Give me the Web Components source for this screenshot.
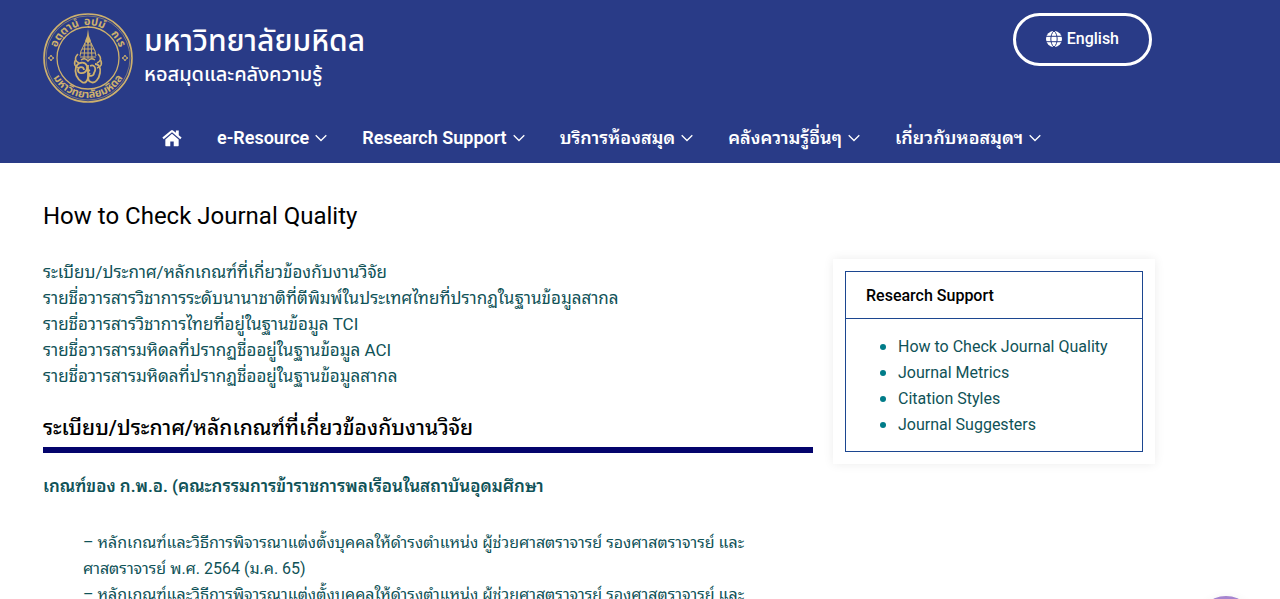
<!DOCTYPE html>
<html lang="th">
<head>
<meta charset="utf-8">
<title>How to Check Journal Quality</title>
<style>
    body {
        margin: 0;
        background: #fff;
        color: #0f5257;
        font: 16px/26px Roboto, "Noto Sans Thai Looped", "Noto Looped Thai", Loma, Garuda, Waree, "Noto Sans Thai", "Noto Sans", sans-serif;
        overflow-x: hidden;
    }
</style>
</head>
<body>
<site-header>
    <site-logo slot="logo"></site-logo>
    <language-button slot="action">English</language-button>
    <nav-item slot="nav" home></nav-item>
    <nav-item slot="nav" menu>e-Resource</nav-item>
    <nav-item slot="nav" menu>Research Support</nav-item>
    <nav-item slot="nav" menu>บริการห้องสมุด</nav-item>
    <nav-item slot="nav" menu>คลังความรู้อื่นๆ</nav-item>
    <nav-item slot="nav" menu>เกี่ยวกับหอสมุดฯ</nav-item>
</site-header>
<page-layout>
    <journal-article></journal-article>
    <side-card slot="aside" heading="Research Support"></side-card>
</page-layout>
<chat-bubble></chat-bubble>

<script>
class SiteHeader extends HTMLElement {
    constructor() {
        super();
        this.attachShadow({mode: 'open'});
        this.shadowRoot.innerHTML = `
            <style>
                :host {
                    display: block;
                    background: #293b87;
                    color: #fff;
                }
                .top {
                    display: flex;
                    justify-content: space-between;
                    align-items: flex-start;
                    padding: 13px 128px 0 43px;
                }
                nav {
                    display: flex;
                    gap: 35px;
                    align-items: center;
                    height: 50px;
                    padding: 0 128px 0 162px;
                    margin-top: 10px;
                }
            </style>
            <header>
                <div class="top">
                    <slot name="logo"></slot>
                    <slot name="action"></slot>
                </div>
                <nav><slot name="nav"></slot></nav>
            </header>
        `;
    }
}

class SiteLogo extends HTMLElement {
    constructor() {
        super();
        this.attachShadow({mode: 'open'});
        this.shadowRoot.innerHTML = `
            <style>
                :host { display: block; }
                a {
                    display: flex;
                    gap: 11px;
                    color: #fff;
                    font-family: "Noto Sans Thai", "Noto Sans", sans-serif;
                    text-decoration: none;
                }
                svg { width: 90px; height: 90px; flex: none; }
                svg text {
                    font-size: 11px;
                    font-weight: bold;
                    fill: #cdb06d;
                }
                .name, .unit { display: block; font-weight: 500; white-space: nowrap; }
                .name { margin-top: 11px; font-size: 30px; line-height: 36px; }
                .unit { font-size: 20px; line-height: 30px; }
            </style>
            <a href="#">
                <svg viewBox="0 0 90 90" fill="none" stroke="#cdb06d" aria-hidden="true">
                    <circle cx="45" cy="45" r="44" stroke-width="1.6"/>
                    <circle cx="45" cy="45" r="42" stroke-width="0.5"/>
                    <circle cx="45" cy="45" r="31" stroke-width="1.3"/>
                    <path id="upper" d="M12 45a33 33 0 0 1 66 0" stroke="none"/>
                    <path id="lower" d="M5 45a40 40 0 0 0 80 0" stroke="none"/>
                    <g stroke="none">
                        <text text-anchor="middle"><textPath href="#upper" startOffset="26%">อตฺตานํ</textPath></text>
                        <text text-anchor="middle"><textPath href="#upper" startOffset="56%">อุปมํ</textPath></text>
                        <text text-anchor="middle"><textPath href="#upper" startOffset="82%">กเร</textPath></text>
                        <text text-anchor="middle"><textPath href="#lower" startOffset="50%">มหาวิทยาลัยมหิดล</textPath></text>
                    </g>
                    <path d="M8 42l1 2 2 1-2 1-1 2-1-2-2-1 2-1zM82 42l1 2 2 1-2 1-1 2-1-2-2-1 2-1z"/>
                    <path fill="#cdb06d" stroke="none" d="M45 16l1 7 2 5-3 3-3-3 2-5z"/>
                    <path d="M43 28l-3 6-2 4-1 5M47 28l3 6 2 4 1 5M41 32h8M39 36h12M38 40h14M37 44h16M45 28v18M42 30l-1 15M48 30l1 15"/>
                    <path stroke-width="1.5" d="M35 41c-4 4-3 7 1 9M33 46c-3 5-1 8 3 9M55 41c4 4 3 7-1 9M57 46c3 5 1 8-3 9M38 47c3-2 5-2 7 1 2-3 4-3 7-1"/>
                    <path stroke-width="1.8" d="M41 57a3 3 0 1 0-4 3c4 1 8-2 7-7-2-5-9-4-11 1-2 6 1 12 6 15 3 2 6-1 6-5V52M47 57a3 3 0 1 0 4 3c3-5 0-9-4-7M52 51c4 0 6 4 5 9-1 6-5 11-9 9-4-1-3-6-1-9"/>
                </svg>
                <span>
                    <span class="name">มหาวิทยาลัยมหิดล</span>
                    <span class="unit">หอสมุดและคลังความรู้</span>
                </span>
            </a>
        `;
    }
}

class LanguageButton extends HTMLElement {
    constructor() {
        super();
        this.attachShadow({mode: 'open'});
        this.shadowRoot.innerHTML = `
            <style>
                :host { display: block; }
                a {
                    display: flex;
                    align-items: center;
                    gap: 5px;
                    padding: 10px 30px 11px;
                    border: 3px solid #fff;
                    border-radius: 27px;
                    color: #fff;
                    font: 500 16px/26px Roboto, sans-serif;
                    text-decoration: none;
                }
                svg { width: 16px; height: 16px; }
            </style>
            <a href="#">
                <svg viewBox="0 0 16 16" aria-hidden="true">
                    <circle cx="8" cy="8" r="8" fill="#fff"/>
                    <path d="M0 5.3h16M0 10.7h16M8 0C3.8 3 3.8 13 8 16M8 0c4.200 3 4.200 13 0 16" fill="none" stroke="#293b87"/>
                </svg>
                <slot></slot>
            </a>
        `;
    }
}

class NavItem extends HTMLElement {
    constructor() {
        super();
        this.attachShadow({mode: 'open'});
        this.shadowRoot.innerHTML = `
            <style>
                :host { display: block; }
                a {
                    display: flex;
                    align-items: center;
                    gap: 6px;
                    color: #fff;
                    font-size: 18px;
                    font-weight: 600;
                    text-decoration: none;
                    white-space: nowrap;
                }
                svg { display: none; }
                :host([home]) .home { display: block; width: 20px; height: 18px; }
                :host([menu]) .arrow { display: block; width: 12px; height: 8px; }
            </style>
            <a href="#">
                <svg class="home" viewBox="0 0 21 18" fill="#fff" role="img" aria-label="Home">
                    <path d="M10.500 4.500L3.500 10.500V17q0 .7.7.7h4.500v-5h3.600v5h4.500q.7 0 .7-.7v-6.500z"/>
                    <path d="M10.500.7q.6 0 1.100.4l3 2.500V1h3v5.100l3 2.500-1.400 1.600-8.700-7.300-8.700 7.300L.4 8.600l9-7.500q.5-.4 1.100-.4z"/>
                </svg>
                <slot></slot>
                <svg class="arrow" viewBox="0 0 12 8" fill="none" stroke="#fff" stroke-width="1.300" aria-hidden="true">
                    <path d="M.7 1.200L6 6.500l5.300-5.300"/>
                </svg>
            </a>
        `;
    }
}

class PageLayout extends HTMLElement {
    constructor() {
        super();
        this.attachShadow({mode: 'open'});
        this.shadowRoot.innerHTML = `
            <style>
                :host {
                    display: grid;
                    grid-template-columns: minmax(0, 770fr) minmax(0, 322fr);
                    gap: 20px;
                    align-items: start;
                    padding: 36px 125px 0 43px;
                }
                aside { margin-top: 60px; }
            </style>
            <main><slot></slot></main>
            <aside><slot name="aside"></slot></aside>
        `;
    }
}

class JournalArticle extends HTMLElement {
    constructor() {
        super();
        this.attachShadow({mode: 'open'});
        this.shadowRoot.innerHTML = `
            <style>
                :host { display: block; }
                a { color: inherit; text-decoration: none; }
                h1, h2, h3 { margin: 0; font-weight: 400; }
                h1 { font-size: 24px; line-height: 34px; color: #000; }
                h2 {
                    margin-top: 20px;
                    border-bottom: 6px solid #04046c;
                    color: #000;
                    font-size: 21px;
                    font-weight: 500;
                    line-height: 38px;
                }
                h3 { margin-top: 20px; font-size: 17px; font-weight: 600; line-height: 26px; }
                ul { list-style: none; margin: 0; padding: 0; }
                .topics { margin-top: 26px; font-size: 17px; }
                .rules { margin-top: 31px; padding: 0 40px; }
            </style>
            <h1>How to Check Journal Quality</h1>
            <ul class="topics">
                <li><a href="#rules">ระเบียบ/ประกาศ/หลักเกณฑ์ที่เกี่ยวข้องกับงานวิจัย</a></li>
                <li><a href="#">รายชื่อวารสารวิชาการระดับนานาชาติที่ตีพิมพ์ในประเทศไทยที่ปรากฏในฐานข้อมูลสากล</a></li>
                <li><a href="#">รายชื่อวารสารวิชาการไทยที่อยู่ในฐานข้อมูล TCI</a></li>
                <li><a href="#">รายชื่อวารสารมหิดลที่ปรากฏชื่ออยู่ในฐานข้อมูล ACI</a></li>
                <li><a href="#">รายชื่อวารสารมหิดลที่ปรากฏชื่ออยู่ในฐานข้อมูลสากล</a></li>
            </ul>
            <h2 id="rules">ระเบียบ/ประกาศ/หลักเกณฑ์ที่เกี่ยวข้องกับงานวิจัย</h2>
            <h3>เกณฑ์ของ ก.พ.อ. (คณะกรรมการข้าราชการพลเรือนในสถาบันอุดมศึกษา</h3>
            <ul class="rules">
                <li><a href="#">– หลักเกณฑ์และวิธีการพิจารณาแต่งตั้งบุคคลให้ดำรงตำแหน่ง ผู้ช่วยศาสตราจารย์ รองศาสตราจารย์ และ<br>ศาสตราจารย์ พ.ศ. 2564 (ม.ค. 65)</a></li>
                <li><a href="#">– หลักเกณฑ์และวิธีการพิจารณาแต่งตั้งบุคคลให้ดำรงตำแหน่ง ผู้ช่วยศาสตราจารย์ รองศาสตราจารย์ และ</a></li>
            </ul>
        `;
    }
}

class SideCard extends HTMLElement {
    constructor() {
        super();
        this.attachShadow({mode: 'open'});
        this.shadowRoot.innerHTML = `
            <style>
                :host {
                    display: block;
                    padding: 12px;
                    background: #fff;
                    box-shadow: 0 0 10px rgba(0, 0, 0, 0.08);
                }
                section { border: 1px solid #1c4690; }
                h2 {
                    margin: 0;
                    padding: 11px 20px 9px;
                    border-bottom: 1px solid #1c4690;
                    color: #000;
                    font-size: 16px;
                    font-weight: 500;
                    line-height: 26px;
                }
                ul { list-style: none; margin: 0; padding: 15px 20px 13px 34px; }
                li { display: flex; align-items: center; gap: 12px; }
                li::before {
                    content: "";
                    width: 6px;
                    height: 6px;
                    border-radius: 50%;
                    background: #007c89;
                }
                a { color: inherit; text-decoration: none; }
            </style>
            <section>
                <h2></h2>
                <ul>
                    <li><a href="#">How to Check Journal Quality</a></li>
                    <li><a href="#">Journal Metrics</a></li>
                    <li><a href="#">Citation Styles</a></li>
                    <li><a href="#">Journal Suggesters</a></li>
                </ul>
            </section>
        `;
    }

    connectedCallback() {
        this.shadowRoot.querySelector('h2').textContent = this.getAttribute('heading');
    }
}

class ChatBubble extends HTMLElement {
    constructor() {
        super();
        this.attachShadow({mode: 'open'});
        this.shadowRoot.innerHTML = `
            <style>
                :host {
                    position: fixed;
                    right: 24px;
                    bottom: -57px;
                }
                button {
                    display: block;
                    width: 60px;
                    height: 60px;
                    border: 0;
                    border-radius: 50%;
                    background: #a584cf;
                    box-shadow: 0 0 8px rgba(0, 0, 0, 0.05);
                }
            </style>
            <button type="button" aria-label="Chat"></button>
        `;
    }
}

customElements.define('site-header', SiteHeader);
customElements.define('site-logo', SiteLogo);
customElements.define('language-button', LanguageButton);
customElements.define('nav-item', NavItem);
customElements.define('page-layout', PageLayout);
customElements.define('journal-article', JournalArticle);
customElements.define('side-card', SideCard);
customElements.define('chat-bubble', ChatBubble);
</script>
</body>
</html>
